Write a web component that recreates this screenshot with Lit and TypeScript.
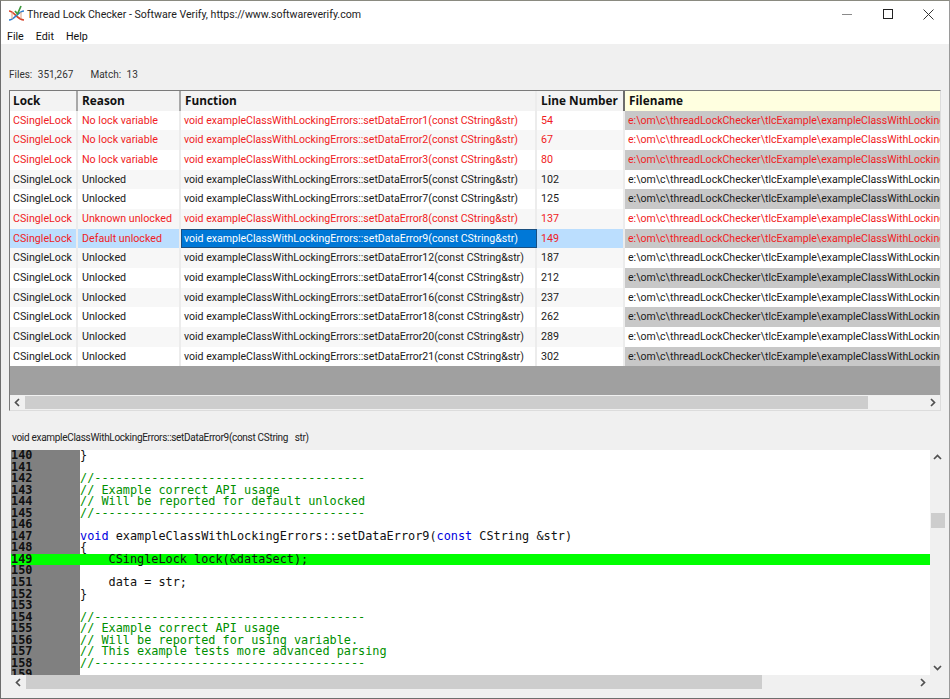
import { LitElement, html, css, svg } from 'lit';
import { customElement } from 'lit/decorators.js';

type Row = { reason: string; fn: number; line: number; red: boolean };

const rows: Row[] = [
  { reason: 'No lock variable', fn: 1, line: 54, red: true },
  { reason: 'No lock variable', fn: 2, line: 67, red: true },
  { reason: 'No lock variable', fn: 3, line: 80, red: true },
  { reason: 'Unlocked', fn: 5, line: 102, red: false },
  { reason: 'Unlocked', fn: 7, line: 125, red: false },
  { reason: 'Unknown unlocked', fn: 8, line: 137, red: true },
  { reason: 'Default unlocked', fn: 9, line: 149, red: true },
  { reason: 'Unlocked', fn: 12, line: 187, red: false },
  { reason: 'Unlocked', fn: 14, line: 212, red: false },
  { reason: 'Unlocked', fn: 16, line: 237, red: false },
  { reason: 'Unlocked', fn: 18, line: 262, red: false },
  { reason: 'Unlocked', fn: 20, line: 289, red: false },
  { reason: 'Unlocked', fn: 21, line: 302, red: false },
];

const PATH = 'e:\\om\\c\\threadLockChecker\\tlcExample\\exampleClassWithLockingErrors.cpp';
const DASH = '//--------------------------------------';

// c = comment, k = keyword, n = plain
const code: [string, string][][] = [
  [['n', '}']],
  [],
  [['c', DASH]],
  [['c', '// Example correct API usage']],
  [['c', '// Will be reported for default unlocked']],
  [['c', DASH]],
  [],
  [['k', 'void'], ['n', ' exampleClassWithLockingErrors::setDataError9('], ['k', 'const'], ['n', ' CString &str)']],
  [['n', '{']],
  [['n', '    CSingleLock lock(&dataSect);']],
  [],
  [['n', '    data = str;']],
  [['n', '}']],
  [],
  [['c', DASH]],
  [['c', '// Example correct API usage']],
  [['c', '// Will be reported for using variable.']],
  [['c', '// This example tests more advanced parsing']],
  [['c', DASH]],
  [],
];

const chevron = (d: string) => svg`<svg width="9" height="9" viewBox="0 0 9 9"><path d=${d} fill="none" stroke="#505050" stroke-width="1.7"/></svg>`;
const LEFT = 'M6 1 L2.5 4.5 L6 8';
const RIGHT = 'M3 1 L6.5 4.5 L3 8';
const UP = 'M1 6 L4.5 2.5 L8 6';
const DOWN = 'M1 3 L4.5 6.5 L8 3';

@customElement('app-root')
export class AppRoot extends LitElement {
  static styles = css`
    :host {
      display: block;
      height: 699px;
      width: 950px;
      overflow: hidden;
      font-family: 'Roboto', 'Noto Sans', sans-serif;
      font-size: 10.7px;
      color: #1a1a1a;
    }
    .window {
      box-sizing: border-box;
      height: 699px;
      display: flex;
      flex-direction: column;
      background: #f0f0f0;
      border: 1px solid #6e6e6e;
      border-top-color: #8a8a80;
      border-right-color: #9a9a9a;
    }
    .titlebar {
      height: 26px;
      flex: none;
      background: #fff;
      display: flex;
      align-items: center;
      padding-left: 7px;
    }
    .titlebar svg.logo { flex: none; margin-right: 1px; }
    .title { flex: 1; font-size: 10.6px; color: #222; white-space: nowrap; }
    .caption { display: flex; flex: none; }
    .caption div {
      width: 41px;
      height: 26px;
      display: flex;
      align-items: center;
      justify-content: center;
    }
    .menu {
      height: 17px;
      flex: none;
      box-sizing: border-box;
      padding: 1px 0 0 6px;
      background: #fff;
      display: flex;
      gap: 12px;
      align-items: center;
      font-size: 10.7px;
      color: #111;
    }
    .status {
      height: 46px;
      flex: none;
      box-sizing: border-box;
      padding: 24px 0 0 8px;
      display: flex;
      gap: 17px;
      font-size: 10px;
      line-height: 14px;
      color: #333;
    }
    .status span { word-spacing: 3px; }
    .list {
      flex: none;
      margin-left: 8px;
      width: 932px;
      height: 321px;
      box-sizing: border-box;
      border: 1px solid #dcdcdc;
      border-top: 1px solid #7a7a7a;
      border-left: 1px solid #7a7a7a;
      display: flex;
      flex-direction: column;
      background: #a0a0a0;
    }
    .grid {
      flex: 1;
      overflow: hidden;
      display: grid;
      grid-template-columns: 68px 103px 356px 88px 1fr;
      grid-auto-rows: 19.67px;
      align-content: start;
    }
    .head {
      height: 20px;
      box-sizing: border-box;
      background: #f3f3f3;
      font-family: 'Open Sans', 'Noto Sans', sans-serif;
      font-weight: 700;
      font-size: 11.8px;
      color: #111;
      padding-left: 4px;
      line-height: 19px;
      border-right: 2px solid #a8a8a8;
      white-space: nowrap;
    }
    .head.first { padding-left: 3px; }
    .head.fn-head { border-right-color: #ececec; }
    .head.line-head { border-right-color: #6c6c6c; }
    .head.file { background: #ffffe0; border-right: 0; }
    .cell {
      box-sizing: border-box;
      padding-left: 3px;
      line-height: 19.67px;
      white-space: nowrap;
      overflow: hidden;
      border-right: 2px solid #ececec;
      background: #fff;
    }
    .cell.wide { padding-left: 4px; }
    .cell.fn, .cell.path { font-size: 10.55px; }
    .cell.even { background: #f7f7f7; }
    .cell.red { color: #f01c24; }
    .cell.sel { background: #bbdefe; }
    .cell.fnsel {
      background: #0078d7;
      color: #fff;
      border: 1px solid #1a4f80;
      padding-left: 2px;
      line-height: 17.67px;
    }
    .cell.path { background: #c8c8c8; border-right: 0; }
    .cell.path.even { background: #fff; }
    .hscroll {
      flex: none;
      height: 15px;
      background: #f0f0f0;
      display: flex;
      align-items: center;
    }
    .arrow {
      flex: none;
      width: 15px;
      height: 15px;
      display: flex;
      align-items: center;
      justify-content: center;
    }
    .track { flex: 1; height: 100%; display: flex; }
    .thumb { background: #cdcdcd; height: 13px; margin-top: 1px; }
    .caption-line {
      flex: none;
      height: 39px;
      box-sizing: border-box;
      padding: 20px 0 0 11px;
      font-size: 10px;
      line-height: 14px;
      letter-spacing: -0.3px;
      color: #222;
      white-space: pre;
    }
    .editor {
      flex: none;
      display: grid;
      grid-template-columns: 919px 17px;
      grid-template-rows: 225px 15px;
      margin-left: 10px;
    }
    .code {
      display: grid;
      grid-template-columns: 69px 1fr;
      background: #fff;
      overflow: hidden;
      font-family: 'DejaVu Sans Mono', monospace;
      font-size: 11.85px;
      line-height: 11.56px;
    }
    .gutter { background: #808080; color: #101010; font-weight: 700; }
    .gutter div { height: 11.56px; }
    .src div { height: 11.56px; color: #111; white-space: pre; }
    .src .c { color: #009000; }
    .src .k { color: #0000e0; }
    .gutter .hilite, .src .hilite { background: #00ff00; }
    .vscroll {
      background: #f0f0f0;
      display: flex;
      flex-direction: column;
      align-items: stretch;
    }
    .vtrack { flex: 1; padding-top: 48px; }
    .vthumb { width: 14px; margin-left: 1px; height: 15px; background: #cdcdcd; }
    .editor-h { display: flex; align-items: center; height: 15px; }
    .editor-h .thumb { height: 14px; margin-top: 0; }
  `;

  private logo() {
    return html`<svg class="logo" width="18" height="18" viewBox="0 0 18 18">
      <path d="M1 6 C6 6 9 15 16 15" fill="none" stroke="#d8452e" stroke-width="1.7"/>
      <path d="M1 15 C7 15 10 6 16 6" fill="none" stroke="#2f7fd0" stroke-width="1.7"/>
      <path d="M4 7 V14 M13 7 V14" stroke="#e0a080" stroke-width="1"/>
      <path d="M7 6 L9.5 9 L13 1" fill="none" stroke="#3d9a3d" stroke-width="1.7"/>
    </svg>`;
  }

  private renderRow(r: Row, i: number) {
    const even = i % 2 === 1 ? ' even' : '';
    const red = r.red ? ' red' : '';
    const sel = r.fn === 9;
    const base = `cell${even}${red}${sel ? ' sel' : ''}`;
    return html`
      <div class=${base}>CSingleLock</div>
      <div class="${base} wide">${r.reason}</div>
      <div class=${sel ? 'cell fn fnsel' : `${base} fn`}>void exampleClassWithLockingErrors::setDataError${r.fn}(const CString&str)</div>
      <div class="${base} wide">${r.line}</div>
      <div class="cell path${even}${red}">${PATH}</div>
    `;
  }

  render() {
    return html`
      <div class="window">
        <div class="titlebar">
          ${this.logo()}
          <div class="title">Thread Lock Checker - Software Verify, https://www.softwareverify.com</div>
          <div class="caption">
            <div><svg width="10" height="10" viewBox="0 0 10 10"><path d="M0 5.5 H10" stroke="#8a8a8a" stroke-width="1"/></svg></div>
            <div><svg width="10" height="10" viewBox="0 0 10 10"><rect x="0.5" y="0.5" width="9" height="9" fill="none" stroke="#222"/></svg></div>
            <div><svg width="11" height="11" viewBox="0 0 11 11"><path d="M0.5 0.5 L10.5 10.5 M10.5 0.5 L0.5 10.5" stroke="#333" stroke-width="1"/></svg></div>
          </div>
        </div>
        <div class="menu"><span>File</span><span>Edit</span><span>Help</span></div>
        <div class="status"><span>Files: 351,267</span><span>Match: 13</span></div>
        <div class="list">
          <div class="grid">
            <div class="head first">Lock</div>
            <div class="head">Reason</div>
            <div class="head fn-head">Function</div>
            <div class="head line-head">Line Number</div>
            <div class="head file">Filename</div>
            ${rows.map((r, i) => this.renderRow(r, i))}
          </div>
          <div class="hscroll">
            <div class="arrow">${chevron(LEFT)}</div>
            <div class="track"><div class="thumb" style="width: 843px"></div></div>
            <div class="arrow">${chevron(RIGHT)}</div>
          </div>
        </div>
        <div class="caption-line">void exampleClassWithLockingErrors::setDataError9(const CString   str)</div>
        <div class="editor">
          <div class="code">
            <div class="gutter">
              ${code.map((_, i) => html`<div class=${i === 9 ? 'hilite' : ''}>${140 + i}</div>`)}
            </div>
            <div class="src">
              ${code.map((l, i) => html`<div class=${i === 9 ? 'hilite' : ''}>${l.map(([t, s]) => html`<span class=${t}>${s}</span>`)}</div>`)}
            </div>
          </div>
          <div class="vscroll">
            <div class="arrow">${chevron(UP)}</div>
            <div class="vtrack"><div class="vthumb"></div></div>
            <div class="arrow">${chevron(DOWN)}</div>
          </div>
          <div class="editor-h">
            <div class="arrow">${chevron(LEFT)}</div>
            <div class="track"><div class="thumb" style="width: 736px"></div></div>
            <div class="arrow">${chevron(RIGHT)}</div>
          </div>
          <div></div>
        </div>
      </div>
    `;
  }
}
